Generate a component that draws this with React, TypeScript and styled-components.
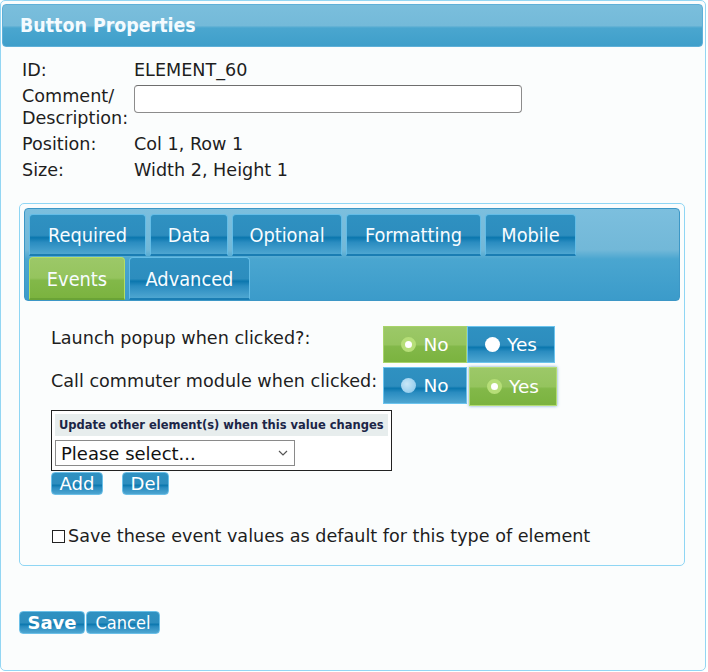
import React from "react";
import styled, { createGlobalStyle, css } from "styled-components";

const GlobalStyle = createGlobalStyle`
  html, body { margin: 0; padding: 0; background: #ffffff; }
  body { font-family: "DejaVu Sans", Verdana, sans-serif; color: #1e1e1e; }
  * { box-sizing: border-box; }
`;

const Dialog = styled.div`
  width: 706px;
  height: 671px;
  border: 1px solid #93d6f3;
  border-radius: 5px;
  background: #fbfdfd;
  padding: 3px 2px 0 1px;
  display: flex;
  flex-direction: column;
`;

const TitleBar = styled.div`
  height: 43px;
  border-radius: 4px;
  border: 1px solid #5fb0d8;
  background: linear-gradient(to bottom, #7abedc 0%, #74bad9 50%, #4aa6cf 56%, #3f9fca 100%);
  display: flex;
  align-items: center;
  padding-left: 17px;
  color: #f4fbff;
  font-family: "DejaVu Sans Condensed", "DejaVu Sans", sans-serif;
  font-weight: bold;
  font-size: 19.4px;
`;

const InfoGrid = styled.div`
  display: grid;
  grid-template-columns: 112px 388px;
  row-gap: 4px;
  margin: 12px 0 0 20px;
  font-size: 17.6px;
  line-height: 22px;
`;

const Label = styled.div``;
const Value = styled.div``;

const TextInput = styled.input`
  width: 388px;
  height: 28px;
  border: 1px solid #8c8c8c;
  border-top-color: #6e6e6e;
  border-radius: 4px;
  background: #fff;
`;

const TabsPanel = styled.div`
  margin: 22px 0 0 17px;
  width: 666px;
  height: 363px;
  border: 1px solid #8fd6f4;
  border-radius: 5px;
  padding: 4px;
  display: flex;
  flex-direction: column;
`;

const TabHeader = styled.div`
  height: 93px;
  border-radius: 4px;
  border: 1px solid #3c97c6;
  background: linear-gradient(to bottom, #7cbfde 0%, #72b8d8 45%, #4aa6d0 55%, #3b9bca 100%);
  padding: 5px 4px 0 4px;
  display: flex;
  flex-direction: column;
  gap: 1px;
`;

const TabRow = styled.div`
  display: flex;
  gap: 4px;
  align-items: flex-end;
`;

const blueGloss = css`
  background: linear-gradient(
    to bottom,
    #2f91c1 0%,
    #2d8dbe 52%,
    #0b77ae 58%,
    #2a8cc0 70%,
    #4ea6d1 100%
  );
`;

const greenGloss = css`
  background: linear-gradient(
    to bottom,
    #9cc868 0%,
    #95c45e 50%,
    #82b849 56%,
    #7bb33f 100%
  );
`;

const Tab = styled.div<{ $active?: boolean; $w: number; $h?: number }>`
  width: ${(p) => p.$w}px;
  height: ${(p) => p.$h ?? 42}px;
  border-radius: 4px 4px 0 0;
  border: 1px solid ${(p) => (p.$active ? "#b3dd66" : "#63bce6")};
  border-bottom: 2px solid ${(p) => (p.$active ? "#6aa336" : "#1a7db3")};
  ${(p) => (p.$active ? greenGloss : blueGloss)};
  color: #f7fcff;
  font-family: "DejaVu Sans Condensed", "DejaVu Sans", sans-serif;
  font-size: 19.8px;
  display: flex;
  align-items: center;
  justify-content: center;
  padding-top: 2px;
`;

const Content = styled.div`
  padding: 25px 0 0 27px;
  display: flex;
  flex-direction: column;
  font-size: 17.6px;
`;

const QuestionRow = styled.div<{ $mt?: number }>`
  display: grid;
  grid-template-columns: 332px auto;
  align-items: center;
  margin-top: ${(p) => p.$mt ?? 0}px;
`;

const QuestionLabel = styled.div<{ $dy?: number }>`
  transform: translateY(${(p) => p.$dy ?? 0}px);
  white-space: nowrap;
`;

const Toggle = styled.div`
  display: flex;
`;

const ToggleBtn = styled.div<{ $on?: boolean; $w: number; $raised?: boolean }>`
  width: ${(p) => p.$w}px;
  height: ${(p) => (p.$raised ? 39 : 37)}px;
  margin-left: ${(p) => (p.$raised ? 2 : 0)}px;
  border: 1px solid ${(p) => (p.$on ? "#a8d46a" : "#6cc4ee")};
  ${(p) => (p.$on ? greenGloss : blueGloss)};
  ${(p) =>
    p.$raised &&
    css`
      box-shadow: 0 0 3px rgba(60, 130, 190, 0.7);
      border-color: #b4dc76;
    `}
  color: #fff;
  font-size: 18.5px;
  display: flex;
  align-items: center;
  justify-content: center;
  gap: 7px;
`;

const Radio = styled.span<{ $kind: "checked" | "empty" | "faint" }>`
  width: 15px;
  height: 15px;
  border-radius: 50%;
  display: inline-block;
  ${(p) =>
    p.$kind === "checked"
      ? css`
          background: #fff;
          border: 4px solid #b6de78;
        `
      : p.$kind === "empty"
      ? css`
          background: #fff;
        `
      : css`
          background: radial-gradient(circle at 40% 40%, #c9e7f7 0%, #9fd2ef 60%, #7fc1e6 100%);
        `}
`;

const UpdateBox = styled.div`
  margin-top: 4px;
  width: 341px;
  height: 61px;
  border: 1px solid #222;
  padding: 3px;
  display: flex;
  flex-direction: column;
  gap: 4px;
  background: #fff;
`;

const UpdateHeader = styled.div`
  height: 22px;
  background: #e7eded;
  color: #1b2547;
  font-size: 11.5px;
  font-weight: bold;
  display: flex;
  align-items: center;
  padding-left: 4px;
  white-space: nowrap;
  overflow: hidden;
`;

const FakeSelect = styled.div`
  width: 240px;
  height: 26px;
  border: 1px solid #8a8a8a;
  background: #fff;
  display: flex;
  align-items: center;
  justify-content: space-between;
  padding: 0 5px 0 5px;
  font-size: 18px;
  color: #111;
`;

const SmallBtnRow = styled.div`
  display: flex;
  gap: 19px;
  margin-top: 1px;
`;

const SmallBtn = styled.div<{ $w: number; $bold?: boolean; $condensed?: boolean }>`
  width: ${(p) => p.$w}px;
  height: 23px;
  border-radius: 4px;
  border: 1px solid #6cc0e8;
  ${blueGloss};
  color: #fff;
  font-size: ${(p) => (p.$condensed ? 18 : 18)}px;
  font-weight: ${(p) => (p.$bold ? "bold" : "normal")};
  font-family: ${(p) =>
    p.$condensed ? `"DejaVu Sans Condensed", "DejaVu Sans", sans-serif` : `"DejaVu Sans", sans-serif`};
  display: flex;
  align-items: center;
  justify-content: center;
  line-height: 1;
`;

const CheckRow = styled.label`
  margin-top: 31px;
  display: flex;
  align-items: center;
  gap: 3px;
  font-size: 17.6px;
  margin-left: 1px;
  white-space: nowrap;
`;

const CheckBox = styled.span`
  width: 13px;
  height: 13px;
  border: 1px solid #222;
  background: #fff;
  display: inline-block;
`;

const Footer = styled.div`
  margin: 45px 0 0 17px;
  display: flex;
  gap: 1px;
`;

const Chevron = () => (
  <svg width="12" height="8" viewBox="0 0 12 8">
    <path d="M2 2 L6 6 L10 2" fill="none" stroke="#555" strokeWidth="1.2" />
  </svg>
);

export default function App() {
  return (
    <>
      <GlobalStyle />
      <Dialog>
        <TitleBar>Button Properties</TitleBar>
        <InfoGrid>
          <Label>ID:</Label>
          <Value>ELEMENT_60</Value>
          <Label>
            Comment/
            <br />
            Description:
          </Label>
          <Value>
            <TextInput />
          </Value>
          <Label>Position:</Label>
          <Value>Col 1, Row 1</Value>
          <Label>Size:</Label>
          <Value>Width 2, Height 1</Value>
        </InfoGrid>
        <TabsPanel>
          <TabHeader>
            <TabRow>
              <Tab $w={117}>Required</Tab>
              <Tab $w={78}>Data</Tab>
              <Tab $w={110}>Optional</Tab>
              <Tab $w={135}>Formatting</Tab>
              <Tab $w={91}>Mobile</Tab>
            </TabRow>
            <TabRow>
              <Tab $w={96} $h={43} $active>
                Events
              </Tab>
              <Tab $w={121} $h={43}>
                Advanced
              </Tab>
            </TabRow>
          </TabHeader>
          <Content>
            <QuestionRow>
              <QuestionLabel $dy={-7}>Launch popup when clicked?:</QuestionLabel>
              <Toggle>
                <ToggleBtn $on $w={84}>
                  <Radio $kind="checked" />
                  No
                </ToggleBtn>
                <ToggleBtn $w={88}>
                  <Radio $kind="empty" />
                  Yes
                </ToggleBtn>
              </Toggle>
            </QuestionRow>
            <QuestionRow $mt={4}>
              <QuestionLabel $dy={-6}>Call commuter module when clicked:</QuestionLabel>
              <Toggle>
                <ToggleBtn $w={84}>
                  <Radio $kind="faint" />
                  No
                </ToggleBtn>
                <ToggleBtn $on $raised $w={88}>
                  <Radio $kind="checked" />
                  Yes
                </ToggleBtn>
              </Toggle>
            </QuestionRow>
            <UpdateBox>
              <UpdateHeader>Update other element(s) when this value changes</UpdateHeader>
              <FakeSelect>
                <span>Please select...</span>
                <Chevron />
              </FakeSelect>
            </UpdateBox>
            <SmallBtnRow>
              <SmallBtn $w={52}>Add</SmallBtn>
              <SmallBtn $w={47}>Del</SmallBtn>
            </SmallBtnRow>
            <CheckRow>
              <CheckBox />
              Save these event values as default for this type of element
            </CheckRow>
          </Content>
        </TabsPanel>
        <Footer>
          <SmallBtn $w={66} $bold>
            Save
          </SmallBtn>
          <SmallBtn $w={74} $condensed>
            Cancel
          </SmallBtn>
        </Footer>
      </Dialog>
    </>
  );
}
